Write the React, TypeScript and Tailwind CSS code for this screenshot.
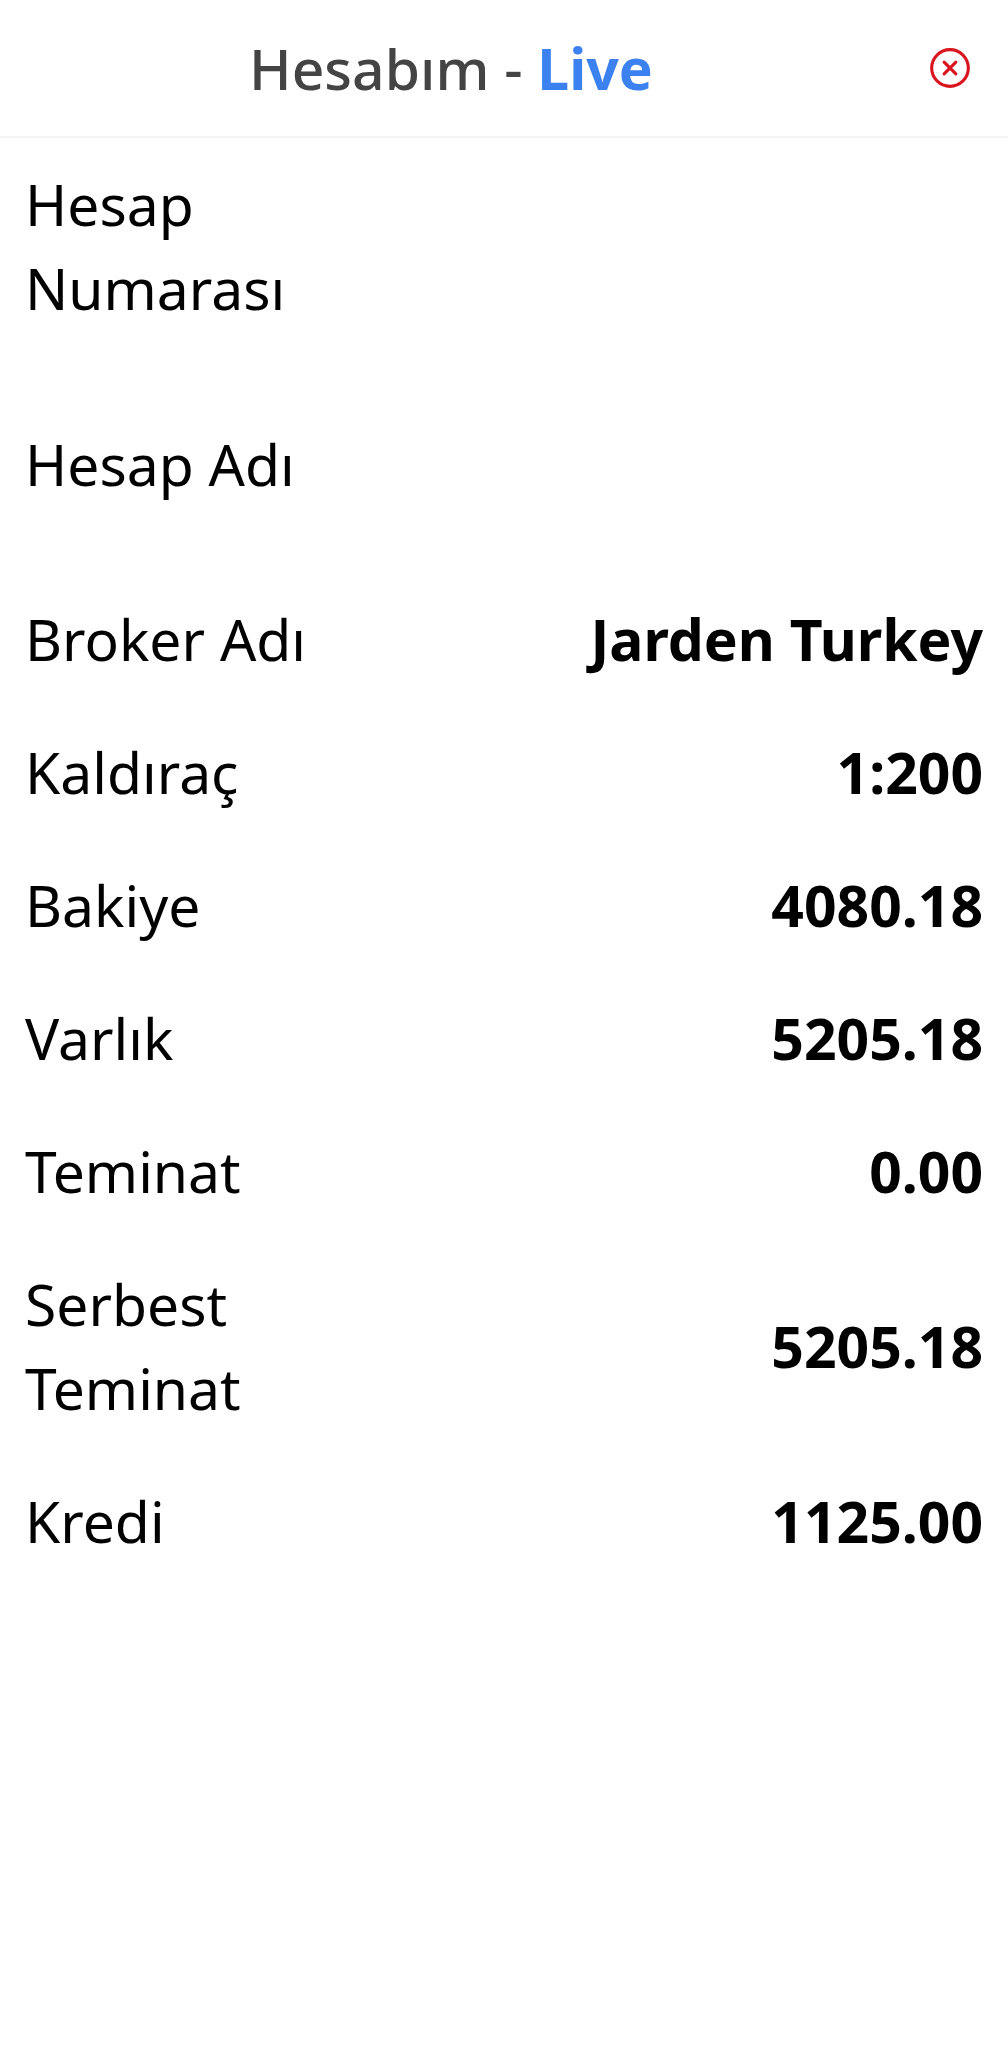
import React from 'react';

const rows = [
  { label: 'Broker Adı', value: 'Jarden Turkey' },
  { label: 'Kaldıraç', value: '1:200' },
  { label: 'Bakiye', value: '4080.18' },
  { label: 'Varlık', value: '5205.18' },
  { label: 'Teminat', value: '0.00' },
  { label: 'Serbest Teminat', value: '5205.18' },
  { label: 'Kredi', value: '1125.00' },
];

function Row({ label, value, className }: { label: string; value?: string; className?: string }) {
  return (
    <div className={`flex items-center justify-between ${className ?? 'py-[24.5px]'}`}>
      <div className="w-[300px] text-black">{label}</div>
      {value && <div className="font-bold text-black">{value}</div>}
    </div>
  );
}

export default function App() {
  return (
    <div className="h-[2048px] w-full bg-white font-['Noto_Sans',sans-serif] text-[57px] leading-[84px]">
      <div className="flex h-[138px] items-center justify-between border-b-2 border-[#f4f4f4] pr-[36px] pl-[249px]">
        <div className="font-medium text-[#444444]">
          Hesabım - <span className="font-bold text-[#3b82f0]">Live</span>
        </div>
        <svg viewBox="0 0 24 24" fill="none" stroke="currentColor" strokeWidth={1.7} className="h-11 w-11 text-[#d9161f]">
          <circle cx="12" cy="12" r="10" />
          <path d="M8.8 8.8l6.4 6.4M15.2 8.8l-6.4 6.4" strokeLinecap="round" />
        </svg>
      </div>
      <div className="pr-[25px] pl-[25px]">
        <Row label="Hesap Numarası" className="pt-[24px] pb-[46px]" />
        <Row label="Hesap Adı" className="pt-[46px] pb-[66px]" />
        {rows.map((row) => (
          <Row key={row.label} label={row.label} value={row.value} />
        ))}
      </div>
    </div>
  );
}
